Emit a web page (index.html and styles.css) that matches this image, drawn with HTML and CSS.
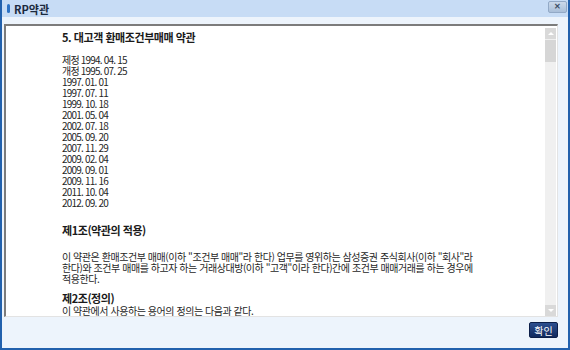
FILE: index.html
```html
<!DOCTYPE html>
<html lang="ko">

<head>
    <meta charset="UTF-8">
    <title>RP약관</title>
    <link rel="stylesheet" href="styles.css">
</head>

<body>
    <div class="window">
        <div class="titlebar">
            <span class="title-mark"></span>
            <span class="title">RP약관</span>
            <button class="close-btn">&#x2715;</button>
        </div>
        <div class="window-body">
            <div class="doc-box">
                <div class="doc">
                    <h4>5. 대고객 환매조건부매매 약관</h4>
                    <div class="dates">
                        <p>제정 1994. 04. 15</p>
                        <p>개정 1995. 07. 25</p>
                        <p>1997. 01. 01</p>
                        <p>1997. 07. 11</p>
                        <p>1999. 10. 18</p>
                        <p>2001. 05. 04</p>
                        <p>2002. 07. 18</p>
                        <p>2005. 09. 20</p>
                        <p>2007. 11. 29</p>
                        <p>2009. 02. 04</p>
                        <p>2009. 09. 01</p>
                        <p>2009. 11. 16</p>
                        <p>2011. 10. 04</p>
                        <p>2012. 09. 20</p>
                    </div>
                    <h4 class="article art-1">제1조(약관의 적용)</h4>
                    <p class="para para-1">이 약관은 환매조건부 매매(이하 "조건부 매매"라 한다) 업무를 영위하는 삼성증권 주식회사(이하 "회사"라<br>한다)와 조건부 매매를 하고자 하는 거래상대방(이하 "고객"이라 한다)간에 조건부 매매거래를 하는 경우에<br>적용한다.</p>
                    <h4 class="article art-2">제2조(정의)</h4>
                    <p class="para para-2">이 약관에서 사용하는 용어의 정의는 다음과 같다.</p>
                    <p class="para indent">1. "조건부 매매"라 함은 일정기간 경과후 일정가액으로 환매수(또는 환매도)할 것을 조건으로 하는 매매를 말한다.</p>
                </div>
                <div class="scrollbar">
                    <div class="sb-btn sb-up"></div>
                    <div class="sb-thumb"></div>
                    <div class="sb-track"></div>
                    <div class="sb-btn sb-down"></div>
                </div>
            </div>
            <div class="footer">
                <button class="ok-btn">확인</button>
            </div>
        </div>
    </div>
</body>

</html>
```

FILE: styles.css
```css
html,
body {
    margin: 0;
    padding: 0;
}

body {
    font-family: "Noto Sans CJK KR", "DejaVu Sans", sans-serif;
    font-size: 10px;
    color: #262626;
}

.window {
    width: 570px;
    height: 350px;
    box-sizing: border-box;
    border: 2px solid #2261ad;
    border-top-width: 0;
    display: flex;
    flex-direction: column;
    background-color: #edf4fc;
}

.titlebar {
    height: 17px;
    flex: none;
    display: flex;
    align-items: center;
    background-color: #c7dcf5;
    padding: 0 1px 0 5px;
}

.title-mark {
    width: 3px;
    height: 9px;
    border-radius: 2px;
    background-color: #2d72c4;
    margin-right: 4px;
}

.title {
    font-weight: bold;
    font-size: 11px;
    color: #1b2a3e;
    flex: 1;
}

.close-btn {
    width: 19px;
    height: 12px;
    margin-top: -3px;
    padding: 0;
    border: 1px solid #92a9c6;
    border-radius: 2px;
    background: linear-gradient(#cbd9ea, #a9bfd9);
    color: #3d4f66;
    font-size: 8px;
    line-height: 10px;
    font-weight: bold;
}

.window-body {
    flex: 1;
    display: flex;
    flex-direction: column;
    padding: 7px 10px 0 2px;
}

.doc-box {
    height: 293px;
    box-sizing: border-box;
    display: flex;
    background-color: #fff;
    border-top: 2px solid #7c7c7c;
    border-left: 2px solid #7c7c7c;
    border-right: 1px solid #e3e3e3;
    border-bottom: 1px solid #e3e3e3;
    padding: 2px 1px 0 0;
}

.doc {
    flex: 1;
    overflow: hidden;
    padding: 4px 0 0 56px;
    letter-spacing: -0.45px;
}

.doc p,
.doc h4 {
    margin: 0;
    line-height: 11px;
    white-space: nowrap;
}

.doc h4 {
    font-size: 11px;
    color: #1a1a1a;
}

.dates {
    margin-top: 11px;
    letter-spacing: -0.8px;
}

.art-1 {
    margin-top: 17px !important;
}

.para-1 {
    margin-top: 15px !important;
}

.art-2 {
    margin-top: 9px !important;
}

.para-2 {
    margin-top: 1px !important;
}

.indent {
    padding-left: 13px;
}

.scrollbar {
    width: 11px;
    display: flex;
    flex-direction: column;
    background-color: #f0f0f0;
}

.sb-btn {
    height: 11px;
    background-color: #d9d9d9;
    position: relative;
}

.sb-btn::after {
    content: "";
    position: absolute;
    left: 3px;
    top: 4px;
    border-left: 3px solid transparent;
    border-right: 3px solid transparent;
}

.sb-up::after {
    border-bottom: 3px solid #fff;
}

.sb-down::after {
    border-top: 3px solid #fff;
}

.sb-thumb {
    height: 22px;
    margin-top: 1px;
    background-color: #d6d6d6;
}

.sb-track {
    flex: 1;
}

.footer {
    display: flex;
    justify-content: flex-end;
    padding-top: 5px;
}

.ok-btn {
    width: 29px;
    height: 16px;
    padding: 0;
    border: 1px solid #0c1f49;
    border-radius: 2px;
    background: linear-gradient(#2c4f8f, #112a5e);
    color: #fff;
    font-family: "Noto Sans CJK KR", sans-serif;
    font-size: 10px;
    line-height: 13px;
}
```
